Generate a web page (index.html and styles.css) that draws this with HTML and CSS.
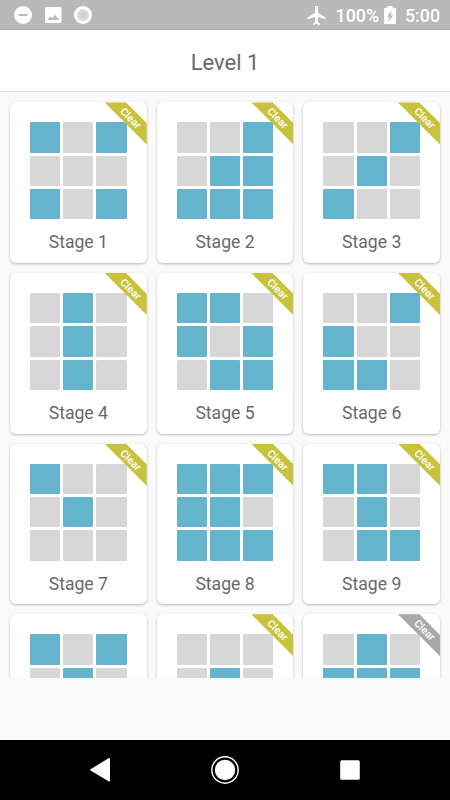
FILE: index.html
```html
<!DOCTYPE html>
<html lang="en">
<head>
<meta charset="utf-8">
<meta name="viewport" content="width=device-width, initial-scale=1">
<title>Level 1</title>
<link rel="stylesheet" href="styles.css">
</head>
<body>
<div class="screen">
  <div class="status">
    <div class="notifications">
      <svg width="18" height="18" viewBox="0 0 18 18"><circle cx="9" cy="9" r="9" fill="#fff"/><rect x="4.500" y="8" width="9" height="2" fill="#b9b9b9"/></svg>
      <svg width="18" height="18" viewBox="0 0 18 18"><rect x="1" y="1" width="16.500" height="16" rx="1.600" fill="#fff"/><path d="M3.500 14 6.300 10.300 8.200 12.400 11.300 8.800 15 14Z" fill="#b9b9b9"/></svg>
      <svg width="18" height="18" viewBox="0 0 18 18"><circle cx="9" cy="9" r="9" fill="#fff"/><circle cx="9" cy="9" r="6" fill="#dadada"/><circle cx="9" cy="9" r="2.700" fill="#cecece"/></svg>
    </div>
    <div class="system">
      <svg class="plane" width="19" height="19" viewBox="2 2 19 20"><path d="M21 16v-2l-8-5V3.500c0-.83-.67-1.500-1.500-1.500S10 2.670 10 3.500V9l-8 5v2l8-2.500V19l-2 1.500V22l3.500-1 3.500 1v-1.500L13 19v-5.500l8 2.500z" fill="#fff"/></svg>
      <span class="percent">100%</span>
      <svg class="battery" width="12" height="18" viewBox="0 0 12 18"><path d="M3.500 0h5v1.800H11q1 0 1 1V17q0 1-1 1H1q-1 0-1-1V2.800q0-1 1-1h2.500Z" fill="#fff"/><path d="M7.600 4.500 2.900 10.700h2.500l-1 5 4.900-6.500H6.800Z" fill="#b9b9b9"/></svg>
      <span class="time">5:00</span>
    </div>
  </div>
  <header class="title">Level 1</header>
  <main class="stages">
    <section class="card"><div class="board"><i class="on"></i><i></i><i class="on"></i><i></i><i></i><i></i><i class="on"></i><i></i><i class="on"></i></div><div class="name">Stage 1</div><div class="ribbon"><span>Clear</span></div></section>
    <section class="card"><div class="board"><i></i><i></i><i class="on"></i><i></i><i class="on"></i><i class="on"></i><i class="on"></i><i class="on"></i><i class="on"></i></div><div class="name">Stage 2</div><div class="ribbon"><span>Clear</span></div></section>
    <section class="card"><div class="board"><i></i><i></i><i class="on"></i><i></i><i class="on"></i><i></i><i class="on"></i><i></i><i></i></div><div class="name">Stage 3</div><div class="ribbon"><span>Clear</span></div></section>
    <section class="card"><div class="board"><i></i><i class="on"></i><i></i><i></i><i class="on"></i><i></i><i></i><i class="on"></i><i></i></div><div class="name">Stage 4</div><div class="ribbon"><span>Clear</span></div></section>
    <section class="card"><div class="board"><i class="on"></i><i class="on"></i><i></i><i class="on"></i><i></i><i class="on"></i><i></i><i class="on"></i><i class="on"></i></div><div class="name">Stage 5</div><div class="ribbon"><span>Clear</span></div></section>
    <section class="card"><div class="board"><i></i><i></i><i class="on"></i><i class="on"></i><i></i><i></i><i class="on"></i><i class="on"></i><i></i></div><div class="name">Stage 6</div><div class="ribbon"><span>Clear</span></div></section>
    <section class="card"><div class="board"><i class="on"></i><i></i><i></i><i></i><i class="on"></i><i></i><i></i><i></i><i></i></div><div class="name">Stage 7</div><div class="ribbon"><span>Clear</span></div></section>
    <section class="card"><div class="board"><i class="on"></i><i class="on"></i><i class="on"></i><i class="on"></i><i class="on"></i><i></i><i class="on"></i><i class="on"></i><i class="on"></i></div><div class="name">Stage 8</div><div class="ribbon"><span>Clear</span></div></section>
    <section class="card"><div class="board"><i class="on"></i><i class="on"></i><i></i><i></i><i class="on"></i><i></i><i></i><i class="on"></i><i class="on"></i></div><div class="name">Stage 9</div><div class="ribbon"><span>Clear</span></div></section>
    <section class="card"><div class="board"><i class="on"></i><i></i><i class="on"></i><i></i><i class="on"></i><i></i></div></section>
    <section class="card"><div class="board"><i></i><i></i><i></i><i></i><i class="on"></i><i></i></div><div class="ribbon"><span>Clear</span></div></section>
    <section class="card"><div class="board"><i></i><i class="on"></i><i></i><i class="on"></i><i class="on"></i><i class="on"></i></div><div class="ribbon gray"><span>Clear</span></div></section>
  </main>
  <div class="spacer"></div>
  <nav class="navbar">
    <svg width="30" height="30" viewBox="0 0 30 30"><path d="M5.500 14.300 23.500 3.300Q25 2.600 25 4V25.500Q25 27 23.500 26.200L5.500 15.500Q4.600 14.900 5.500 14.300Z" fill="#fff"/></svg>
    <svg width="30" height="30" viewBox="0 0 30 30"><circle cx="15" cy="15" r="13.200" fill="none" stroke="#fff" stroke-width="1.400"/><circle cx="15" cy="15" r="10.200" fill="#fff"/></svg>
    <svg width="30" height="30" viewBox="0 0 30 30"><rect x="5.200" y="5.200" width="19.600" height="19.600" rx="1.500" fill="#fff"/></svg>
  </nav>
</div>
</body>
</html>
```
FILE: styles.css
```css
* {
  box-sizing: border-box;
}

body {
  margin: 0;
  background: #fafafa;
  font-family: Roboto, "Liberation Sans", sans-serif;
  color: #696969;
}

svg {
  display: block;
  flex: none;
}

.screen {
  display: flex;
  flex-direction: column;
  width: 450px;
  height: 800px;
  overflow: hidden;
}

.status {
  display: flex;
  flex: none;
  justify-content: space-between;
  height: 30px;
  padding: 0 10px 0 13.500px;
  background: #b9b9b9;
  border-bottom: 1px solid #b0b0b0;
  color: #fff;
  font-size: 18px;
  font-weight: 500;
}

.notifications {
  display: flex;
  gap: 12px;
  padding-top: 6px;
}

.system {
  display: flex;
  line-height: 31px;
}

.plane {
  margin: 6px 10px 0 0;
}

.percent {
  font-size: 17.800px;
}

.battery {
  margin: 6px 9px 0 5px;
}

.time {
  font-size: 17.800px;
}

.title {
  flex: none;
  height: 62px;
  border-bottom: 1px solid #dedede;
  background: #fff;
  font-size: 22px;
  line-height: 65px;
  text-align: center;
}

.stages {
  display: grid;
  flex: none;
  grid-template-columns: repeat(3, 1fr);
  grid-auto-rows: 160.670px;
  gap: 10px;
  height: 585.700px;
  padding: 10.400px 10px 0;
  overflow: hidden;
}

.card {
  position: relative;
  padding: 20px 20px 0;
  border-radius: 6px;
  background: #fff;
  box-shadow: 0 1px 2.500px rgba(0, 0, 0, 0.27);
}

.board {
  display: grid;
  grid-template-columns: repeat(3, 1fr);
  grid-auto-rows: 30.300px;
  gap: 3px;
}

.board i {
  border-radius: 1px;
  background: #d7d7d7;
}

.board .on {
  background: #65b4cd;
}

.name {
  margin-top: 12px;
  font-size: 17.600px;
  line-height: 22px;
  text-align: center;
}

.ribbon {
  position: absolute;
  top: 0;
  right: 0;
  display: flex;
  align-items: center;
  justify-content: center;
  width: 42px;
  height: 42px;
  background: #c9c23c;
  clip-path: polygon(0 0, 51% 0, 100% 49%, 100% 100%);
  color: #fff;
  font-size: 10.500px;
  font-weight: 500;
  line-height: 12px;
}

.ribbon span {
  transform: translate(5px, -4.500px) rotate(45deg);
}

.ribbon.gray {
  background: #a9a9a9;
}

.spacer {
  flex: 1;
}

.navbar {
  display: flex;
  flex: none;
  justify-content: space-between;
  height: 60px;
  padding: 15px 85px;
  background: #000;
}
```
